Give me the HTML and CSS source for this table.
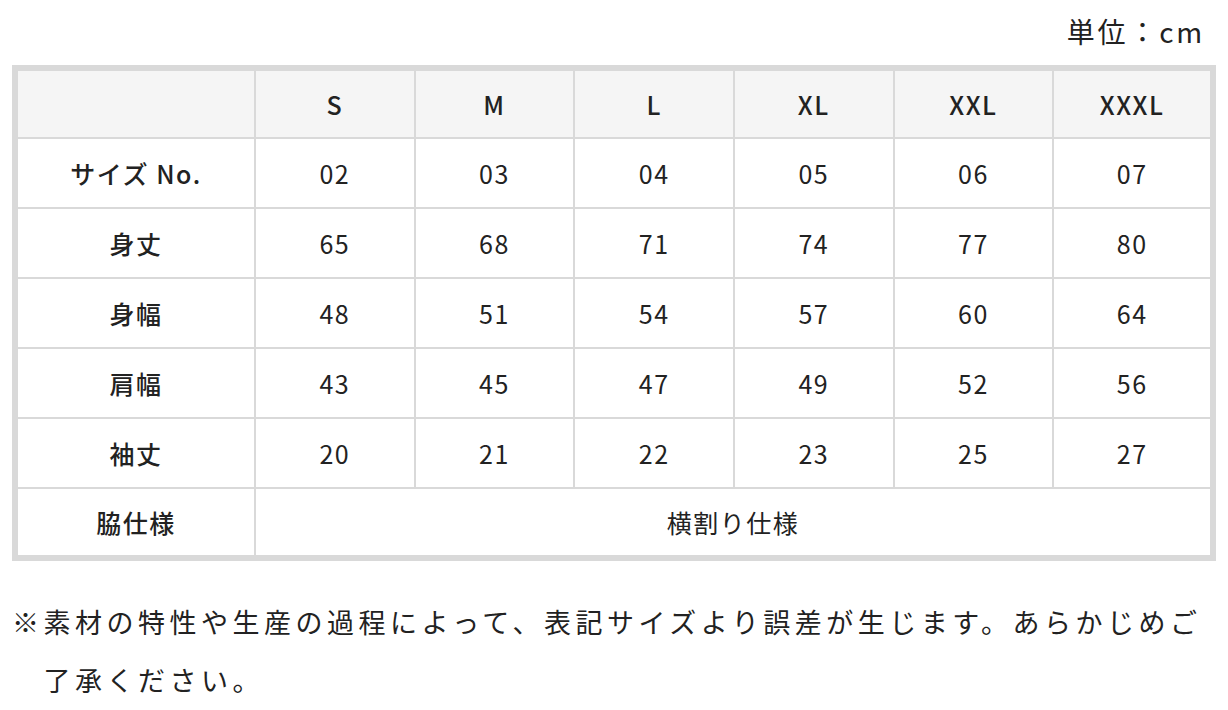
FILE: index.html
```html
<!DOCTYPE html>
<html lang="ja">
<head>
<meta charset="utf-8">
<title>サイズ表</title>
<link rel="stylesheet" href="styles.css">
</head>
<body>
<div class="page">
  <p class="unit">単位：cm</p>
  <table class="size-table">
    <thead>
      <tr>
        <th class="corner"></th>
        <th>S</th><th>M</th><th>L</th><th>XL</th><th>XXL</th><th>XXXL</th>
      </tr>
    </thead>
    <tbody>
      <tr><th>サイズ No.</th><td>02</td><td>03</td><td>04</td><td>05</td><td>06</td><td>07</td></tr>
      <tr><th>身丈</th><td>65</td><td>68</td><td>71</td><td>74</td><td>77</td><td>80</td></tr>
      <tr><th>身幅</th><td>48</td><td>51</td><td>54</td><td>57</td><td>60</td><td>64</td></tr>
      <tr><th>肩幅</th><td>43</td><td>45</td><td>47</td><td>49</td><td>52</td><td>56</td></tr>
      <tr><th>袖丈</th><td>20</td><td>21</td><td>22</td><td>23</td><td>25</td><td>27</td></tr>
      <tr><th>脇仕様</th><td colspan="6">横割り仕様</td></tr>
    </tbody>
  </table>
  <p class="note">※素材の特性や生産の過程によって、表記サイズより誤差が生じます。あらかじめご了承ください。</p>
</div>
</body>
</html>
```

FILE: styles.css
```css
html, body {
  margin: 0;
  padding: 0;
  background: #ffffff;
}

body {
  font-family: "Noto Sans CJK JP", "Noto Sans", sans-serif;
  color: #222222;
}

.page {
  padding: 0 12px;
}

.unit {
  margin: 0;
  padding: 11px 11px 0 0;
  height: 65px;
  box-sizing: border-box;
  text-align: right;
  font-size: 28px;
  line-height: 40px;
  letter-spacing: 0.1em;
}

.size-table {
  width: 100%;
  border-collapse: collapse;
  border: 6px solid #d9d9d9;
  table-layout: fixed;
}

.size-table th,
.size-table td {
  border: 2px solid #d9d9d9;
  height: 70px;
  padding: 0;
  text-align: center;
  vertical-align: middle;
  font-size: 25px;
  letter-spacing: 0.06em;
  box-sizing: border-box;
}

.size-table th {
  font-weight: 500;
}

.size-table td {
  font-weight: 400;
}

.size-table thead th {
  background: #f5f5f5;
}

.size-table tbody th {
  background: #ffffff;
}

.size-table thead th.corner {
  width: 240px;
}

.note {
  margin: 32px 0 0;
  padding-left: 31.5px;
  text-indent: -31.5px;
  font-size: 27px;
  line-height: 58px;
  letter-spacing: 4.5px;
}
```
